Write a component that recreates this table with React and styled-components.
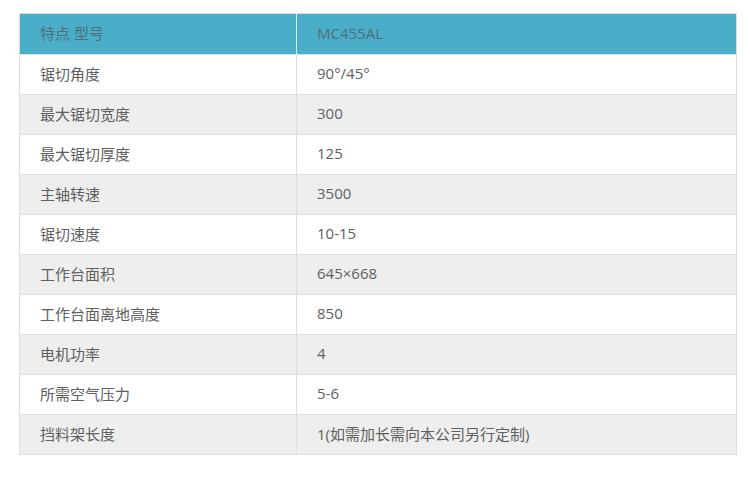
import styled, { createGlobalStyle } from "styled-components";

const rows = [
  ["锯切角度", "90°/45°"],
  ["最大锯切宽度", "300"],
  ["最大锯切厚度", "125"],
  ["主轴转速", "3500"],
  ["锯切速度", "10-15"],
  ["工作台面积", "645×668"],
  ["工作台面离地高度", "850"],
  ["电机功率", "4"],
  ["所需空气压力", "5-6"],
  ["挡料架长度", "1(如需加长需向本公司另行定制)"],
];

export default function App() {
  return (
    <>
      <GlobalStyle />
      <Page>
        <SpecTable>
          <thead>
            <tr>
              <HeadCell $first>特点 型号</HeadCell>
              <HeadCell>MC455AL</HeadCell>
            </tr>
          </thead>
          <tbody>
            {rows.map(([name, value], i) => (
              <Row key={name} $striped={i % 2 === 1}>
                <Cell $first>{name}</Cell>
                <Cell>{value}</Cell>
              </Row>
            ))}
          </tbody>
        </SpecTable>
      </Page>
    </>
  );
}

const GlobalStyle = createGlobalStyle`
  body {
    margin: 0;
    background: #fff;
    font-family: "Open Sans", "Noto Sans CJK SC", sans-serif;
  }
`;

const Page = styled.div`
  padding: 13px 13px 0 19px;
`;

const SpecTable = styled.table`
  width: 718px;
  border-collapse: collapse;
  border: 1px solid #dedede;
  font-size: 15px;
  color: #606060;
`;

const HeadCell = styled.th`
  height: 37px;
  padding: 0 0 3px 20px;
  text-align: left;
  font-weight: normal;
  background: #4aaec8;
  color: #4f6e7a;
  width: ${(p) => (p.$first ? "256px" : "auto")};
  border-left: ${(p) => (p.$first ? "none" : "1px solid #d6eef4")};
`;

const Row = styled.tr`
  background: ${(p) => (p.$striped ? "#eeeeee" : "#ffffff")};
  border-top: 1px solid #dedede;
`;

const Cell = styled.td`
  height: 36px;
  padding: 0 0 3px 20px;
  border-left: ${(p) => (p.$first ? "none" : "1px solid #dedede")};
`;
